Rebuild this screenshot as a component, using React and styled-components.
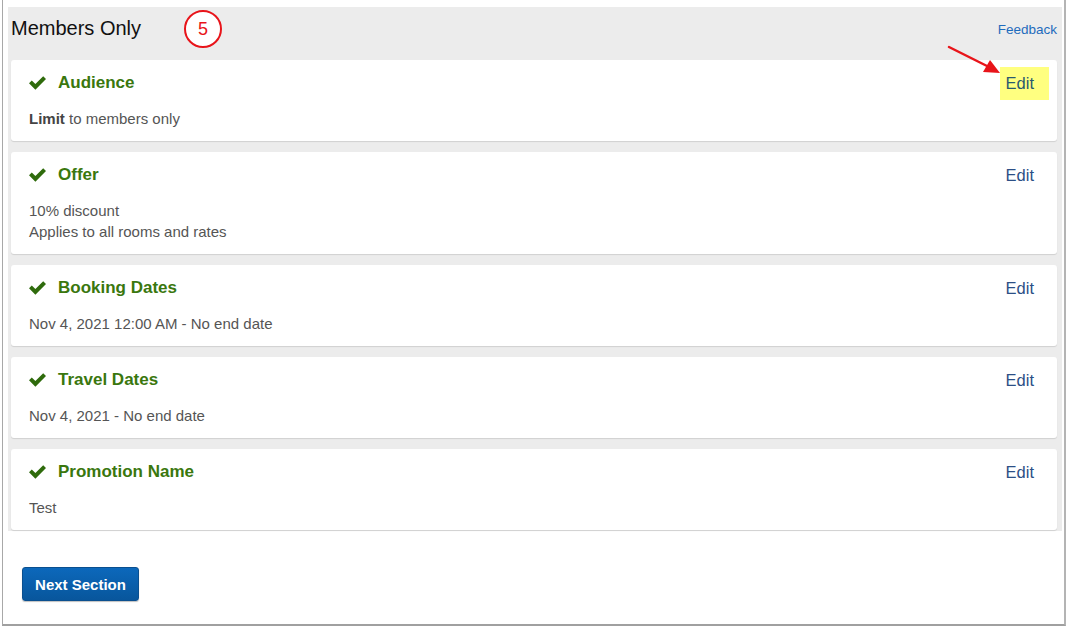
import React from "react"
import styled, { createGlobalStyle } from "styled-components"

const GlobalStyle = createGlobalStyle`
  html, body {
    margin: 0;
    padding: 0;
    background: #ffffff;
    font-family: "Liberation Sans", Arial, sans-serif;
  }
`

const Frame = styled.div`
  position: relative;
  box-sizing: border-box;
  width: 1064px;
  height: 626px;
  margin-left: 2px;
  border-left: 1px solid #a8a8a8;
  border-right: 2px solid #b4b4b4;
  border-bottom: 2px solid #a0a0a0;
  background: #fff;
  padding: 7px 2px 0 5px;
`

const Panel = styled.div`
  background: #ececec;
  padding: 0 5px 1px 3px;
`

const PanelHeader = styled.div`
  height: 53px;
  display: flex;
  align-items: flex-start;
  justify-content: space-between;
`

const PanelTitle = styled.h2`
  margin: 10px 0 0;
  font-size: 20px;
  font-weight: normal;
  color: #111;
  line-height: 22px;
`

const Feedback = styled.a`
  margin: 15px 0 0 0;
  font-size: 13.5px;
  color: #1e6bbd;
  text-decoration: none;
`

const CardList = styled.div`
  display: flex;
  flex-direction: column;
  gap: 11px;
`

const Card = styled.div`
  background: #fff;
  border-radius: 3px;
  box-shadow: 0 1px 1px rgba(0, 0, 0, 0.12);
  padding: 13px 23px 12px 18px;
`

const CardHead = styled.div`
  display: flex;
  align-items: center;
  justify-content: space-between;
  height: 20px;
`

const CardTitle = styled.div`
  display: flex;
  align-items: center;
  gap: 12px;
  font-size: 17px;
  font-weight: bold;
  color: #3a770e;
`

const Check = styled.svg`
  display: block;
  fill: #2f6b0c;
`

const EditLink = styled.a`
  font-size: 16.5px;
  color: #2c4f86;
  text-decoration: none;
  ${({ highlight }) =>
    highlight &&
    `
    background: #ffff80;
    padding: 7px 15px 7px 6px;
    margin: -7px -15px -7px -6px;
    color: #2a5a6e;
  `}
`

const CardBody = styled.div`
  margin-top: 15px;
  font-size: 15px;
  line-height: 21px;
  color: #555;

  b {
    color: #444;
  }
`

const Footer = styled.div`
  padding: 36px 0 0 14px;
`

const NextButton = styled.button`
  width: 117px;
  height: 34px;
  border: 1px solid #0a4f8f;
  border-radius: 3px;
  background: linear-gradient(#0c68bb, #08569c);
  color: #fff;
  font-family: "Liberation Sans", Arial, sans-serif;
  font-size: 15px;
  font-weight: bold;
  box-shadow: 0 1px 1px rgba(0, 0, 0, 0.25);
`

const StepBadge = styled.div`
  position: absolute;
  left: 181px;
  top: 10px;
  width: 34px;
  height: 34px;
  border: 2px solid #e8141a;
  border-radius: 50%;
  display: flex;
  align-items: center;
  justify-content: center;
  color: #e8141a;
  font-size: 18px;
  background: #fff;
`

const Arrow = styled.svg`
  position: absolute;
  left: 940px;
  top: 42px;
`

const CheckIcon = () => (
  <Check width="17" height="14" viewBox="0 0 17 14">
    <path d="M0 7.3 L2.8 4.5 L6.4 8.1 L14.2 0.3 L17 3.1 L6.4 13.7 Z" />
  </Check>
)

const sections = [
  { title: "Audience", body: [<><b>Limit</b> to members only</>], highlight: true },
  { title: "Offer", body: ["10% discount", "Applies to all rooms and rates"] },
  { title: "Booking Dates", body: ["Nov 4, 2021 12:00 AM - No end date"] },
  { title: "Travel Dates", body: ["Nov 4, 2021 - No end date"] },
  { title: "Promotion Name", body: ["Test"] },
]

export default function App() {
  return (
    <>
      <GlobalStyle />
      <Frame>
        <Panel>
          <PanelHeader>
            <PanelTitle>Members Only</PanelTitle>
            <Feedback href="#">Feedback</Feedback>
          </PanelHeader>
          <CardList>
            {sections.map((s) => (
              <Card key={s.title}>
                <CardHead>
                  <CardTitle>
                    <CheckIcon />
                    {s.title}
                  </CardTitle>
                  <EditLink href="#" highlight={s.highlight}>
                    Edit
                  </EditLink>
                </CardHead>
                <CardBody>
                  {s.body.map((line, i) => (
                    <div key={i}>{line}</div>
                  ))}
                </CardBody>
              </Card>
            ))}
          </CardList>
        </Panel>
        <Footer>
          <NextButton>Next Section</NextButton>
        </Footer>
        <StepBadge>5</StepBadge>
        <Arrow width="64" height="40" viewBox="0 0 64 40">
          <line x1="6" y1="5" x2="46" y2="25" stroke="#e8141a" strokeWidth="2.5" strokeLinecap="round" />
          <polygon points="57,31 40,30 47,18" fill="#e8141a" />
        </Arrow>
      </Frame>
    </>
  )
}
